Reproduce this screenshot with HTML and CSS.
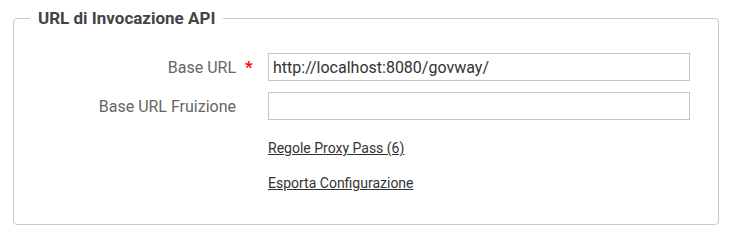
FILE: index.html
```html
<!DOCTYPE html>
<html lang="it">
<head>
<meta charset="utf-8">
<title>URL di Invocazione API</title>
<link rel="stylesheet" href="styles.css">
</head>
<body>
<fieldset class="panel">
  <legend class="panel-title">URL di Invocazione API</legend>
  <div class="form-rows">
    <div class="row">
      <label class="row-label" for="base-url">Base URL</label>
      <span class="required">*</span>
      <input class="text-input" id="base-url" type="text" value="http://localhost:8080/govway/">
    </div>
    <div class="row">
      <label class="row-label" for="base-url-fruizione">Base URL Fruizione</label>
      <span class="required"></span>
      <input class="text-input" id="base-url-fruizione" type="text" value="">
    </div>
    <div class="row link-row">
      <span class="row-label"></span>
      <span class="required"></span>
      <a class="link" href="#">Regole Proxy Pass (6)</a>
    </div>
    <div class="row link-row">
      <span class="row-label"></span>
      <span class="required"></span>
      <a class="link" href="#">Esporta Configurazione</a>
    </div>
  </div>
</fieldset>
</body>
</html>
```
FILE: styles.css
```css
html, body {
  margin: 0;
  padding: 0;
  background: #ffffff;
}

body {
  font-family: Roboto, "Liberation Sans", sans-serif;
  color: #333333;
}

.panel {
  margin: 8px 18px 0 13px;
  padding: 0 0 31px 0;
  border: 1px solid #c8c8c8;
  border-radius: 4px;
  min-inline-size: 0;
}

.panel-title {
  margin-left: 16px;
  padding: 0 8px;
  font-size: 17px;
  font-weight: 700;
  line-height: 20px;
  color: #444444;
}

.form-rows {
  display: flex;
  flex-direction: column;
  padding-top: 25px;
}

.row {
  display: flex;
  align-items: center;
  height: 28px;
  margin-bottom: 11px;
}

.row:nth-child(2) {
  margin-bottom: 18px;
}

.link-row {
  height: 20px;
  margin-bottom: 15px;
}

.link-row:last-child {
  margin-bottom: 0;
}

.row-label {
  width: 222px;
  flex: none;
  text-align: right;
  font-size: 16px;
  color: #666666;
}

.required {
  width: 32px;
  flex: none;
  box-sizing: border-box;
  padding-left: 9px;
  font-size: 17px;
  font-weight: 700;
  color: #ff0000;
}

.text-input {
  box-sizing: border-box;
  width: 422px;
  height: 28px;
  margin: 0;
  padding: 0 4px;
  border: 1px solid #c5c5c5;
  border-radius: 0;
  font-family: Roboto, "Liberation Sans", sans-serif;
  font-size: 16px;
  color: #333333;
  background: #ffffff;
  outline: none;
}

.link {
  font-size: 14px;
  line-height: 20px;
  color: #333333;
  text-decoration: underline;
}
```
